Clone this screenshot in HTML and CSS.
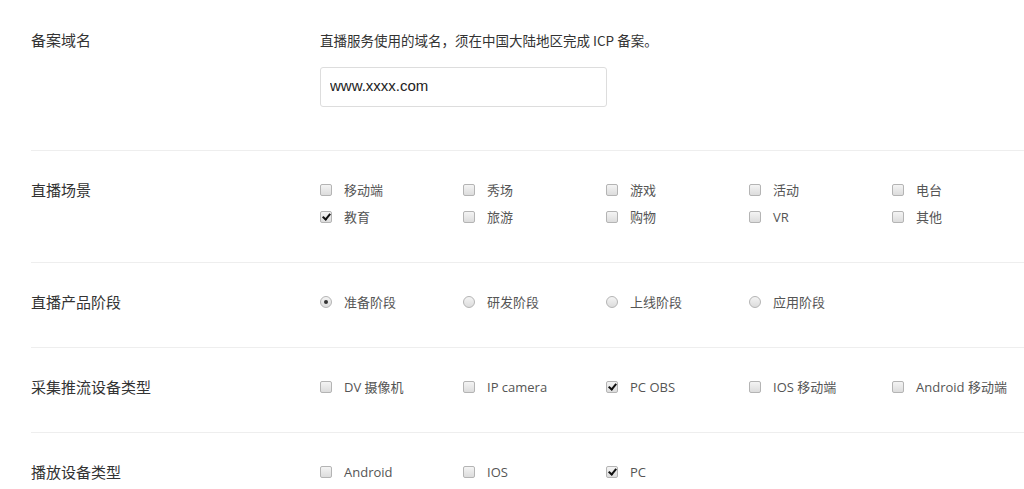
FILE: index.html
```html
<!DOCTYPE html>
<html lang="zh">
<head>
<meta charset="utf-8">
<link rel="stylesheet" href="styles.css">
</head>
<body>
<div class="form">
  <div class="row row-first">
    <div class="label">备案域名</div>
    <div class="field">
      <p class="desc">直播服务使用的域名，须在中国大陆地区完成 ICP 备案。</p>
      <input class="text-input" type="text" value="www.xxxx.com">
    </div>
  </div>

  <div class="row">
    <div class="label">直播场景</div>
    <div class="field options">
      <label class="opt"><span class="box"></span>移动端</label>
      <label class="opt"><span class="box"></span>秀场</label>
      <label class="opt"><span class="box"></span>游戏</label>
      <label class="opt"><span class="box"></span>活动</label>
      <label class="opt"><span class="box"></span>电台</label>
      <label class="opt"><span class="box checked"></span>教育</label>
      <label class="opt"><span class="box"></span>旅游</label>
      <label class="opt"><span class="box"></span>购物</label>
      <label class="opt"><span class="box"></span>VR</label>
      <label class="opt"><span class="box"></span>其他</label>
    </div>
  </div>

  <div class="row">
    <div class="label">直播产品阶段</div>
    <div class="field options">
      <label class="opt"><span class="radio checked"></span>准备阶段</label>
      <label class="opt"><span class="radio"></span>研发阶段</label>
      <label class="opt"><span class="radio"></span>上线阶段</label>
      <label class="opt"><span class="radio"></span>应用阶段</label>
    </div>
  </div>

  <div class="row">
    <div class="label">采集推流设备类型</div>
    <div class="field options">
      <label class="opt"><span class="box"></span>DV 摄像机</label>
      <label class="opt"><span class="box"></span>IP camera</label>
      <label class="opt"><span class="box checked"></span>PC OBS</label>
      <label class="opt"><span class="box"></span>IOS 移动端</label>
      <label class="opt"><span class="box"></span>Android 移动端</label>
    </div>
  </div>

  <div class="row">
    <div class="label">播放设备类型</div>
    <div class="field options">
      <label class="opt"><span class="box"></span>Android</label>
      <label class="opt"><span class="box"></span>IOS</label>
      <label class="opt"><span class="box checked"></span>PC</label>
    </div>
  </div>
</div>
</body>
</html>
```

FILE: styles.css
```css
html, body {
  margin: 0;
  padding: 0;
  background: #fff;
}

body {
  font-family: "Open Sans", "Noto Sans CJK SC", sans-serif;
  color: #333;
  overflow: hidden;
}

.form {
  padding-left: 31px;
}

.row {
  display: flex;
  border-top: 1px solid #eeeeee;
  padding: 25px 0 32px;
}

.row-first {
  border-top: none;
  padding: 30px 0 43px;
}

.label {
  width: 289px;
  flex: none;
  font-size: 15px;
  line-height: 27px;
  color: #333;
  font-family: "Noto Sans CJK SC", sans-serif;
}

.row-first .label {
  line-height: 20px;
}

.field {
  flex: none;
}

.desc {
  margin: 0;
  font-size: 13.5px;
  line-height: 20px;
  color: #333;
  font-family: "Noto Sans CJK SC", sans-serif;
}

.text-input {
  display: block;
  margin-top: 17px;
  box-sizing: border-box;
  width: 287px;
  height: 40px;
  border: 1px solid #dddddd;
  border-radius: 3px;
  padding: 0 9px 3px;
  font-family: "Liberation Sans", Arial, sans-serif;
  font-size: 15px;
  color: #222;
  outline: none;
}

.options {
  display: grid;
  grid-template-columns: repeat(5, 143px);
}

.opt {
  display: flex;
  align-items: center;
  height: 27px;
  font-size: 13px;
  color: #555;
  white-space: nowrap;
}

.box,
.radio {
  flex: none;
  width: 12px;
  height: 12px;
  box-sizing: border-box;
  margin-right: 12px;
  border: 1px solid #b4b4b4;
  background: linear-gradient(#f4f4f4, #dcdcdc);
  position: relative;
}

.box {
  border-radius: 2px;
}

.radio {
  border-radius: 50%;
}

.box.checked::after {
  content: "";
  position: absolute;
  left: 3px;
  top: 0px;
  width: 3px;
  height: 6px;
  border-right: 2px solid #111;
  border-bottom: 2px solid #111;
  transform: rotate(40deg);
}

.radio.checked::after {
  content: "";
  position: absolute;
  left: 3px;
  top: 3px;
  width: 4px;
  height: 4px;
  border-radius: 50%;
  background: #333;
}
```
